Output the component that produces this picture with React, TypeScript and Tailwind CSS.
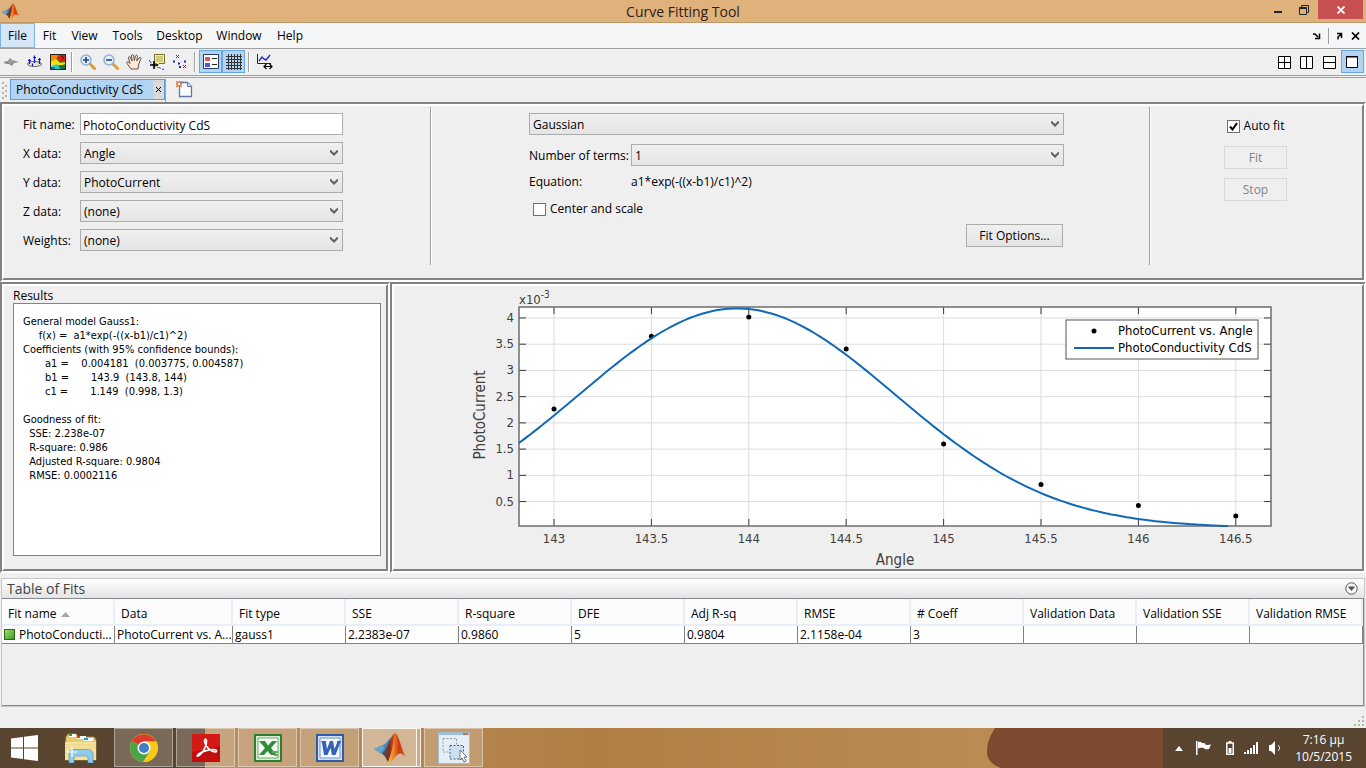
import React, { useState } from 'react';

const menuItems = [
  { name: 'File', width: 'w-[35px]' },
  { name: 'Fit', width: 'w-[29px]' },
  { name: 'View', width: 'w-[41px]' },
  { name: 'Tools', width: 'w-[45px]' },
  { name: 'Desktop', width: 'w-[59px]' },
  { name: 'Window', width: 'w-[60px]' },
  { name: 'Help', width: 'w-[42px]' },
];

const resultText = `General model Gauss1:
     f(x) =  a1*exp(-((x-b1)/c1)^2)
Coefficients (with 95% confidence bounds):
       a1 =    0.004181  (0.003775, 0.004587)
       b1 =       143.9  (143.8, 144)
       c1 =       1.149  (0.998, 1.3)

Goodness of fit:
  SSE: 2.238e-07
  R-square: 0.986
  Adjusted R-square: 0.9804
  RMSE: 0.0002116`;

const columns = [
  { title: 'Fit name', value: 'PhotoConducti...' },
  { title: 'Data', value: 'PhotoCurrent vs. A...' },
  { title: 'Fit type', value: 'gauss1' },
  { title: 'SSE', value: '2.2383e-07' },
  { title: 'R-square', value: '0.9860' },
  { title: 'DFE', value: '5' },
  { title: 'Adj R-sq', value: '0.9804' },
  { title: 'RMSE', value: '2.1158e-04' },
  { title: '# Coeff', value: '3' },
  { title: 'Validation Data', value: '' },
  { title: 'Validation SSE', value: '' },
  { title: 'Validation RMSE', value: '' },
];

const points = [
  [143, 2.265], [143.5, 3.65], [144, 4.02], [144.5, 3.408],
  [145, 1.597], [145.5, 0.825], [146, 0.423], [146.5, 0.225],
];

// ---------- small building blocks ----------

// Sunken frame: grey over white on the top left, white over grey on the bottom right
const Frame: React.FC<{ className: string; inner: string; children: React.ReactNode }> = ({ className, inner, children }) => (
  <section className={`flex border-2 border-t-[#828282] border-l-[#828282] border-r-white border-b-white ${className}`}>
    <div className={`flex-1 min-w-0 flex border-2 border-t-white border-l-white border-r-[#828282] border-b-[#828282] ${inner}`}>
      {children}
    </div>
  </section>
);

const Combo: React.FC<{ id: string; label?: string; options: string[] }> = ({ id, label, options }) => (
  <div className="grid flex-1 min-w-0">
    <select
      id={id}
      aria-label={label}
      className="col-start-1 row-start-1 h-[22px] w-full appearance-none border border-[#acacac] bg-linear-to-b from-[#f0f0f0] to-[#e5e5e5] pt-[2px] pl-[3px] text-xs leading-4"
    >
      {options.map((o) => <option key={o}>{o}</option>)}
    </select>
    <svg className="col-start-1 row-start-1 mr-[5px] justify-self-end self-center pointer-events-none" width="8" height="6" viewBox="0 0 8 6">
      <path d="M0 0.5L4 4.5L8 0.5" fill="none" stroke="#606060" strokeWidth="2" />
    </svg>
  </div>
);

const Check: React.FC<{ id: string; label: string; initial: boolean }> = ({ id, label, initial }) => {
  const [checked, setChecked] = useState(initial);
  return (
    <div className="flex h-4 items-center gap-1">
      <span className="grid place-items-center">
        <input
          id={id}
          type="checkbox"
          checked={checked}
          onChange={() => setChecked(!checked)}
          className="col-start-1 row-start-1 size-[13px] appearance-none border border-[#707070] bg-white"
        />
        {checked && (
          <svg className="col-start-1 row-start-1 pointer-events-none" width="9" height="9" viewBox="0 0 9 9">
            <path d="M1 4.5L3.5 7.5L8 1" fill="none" stroke="#000" strokeWidth="2" />
          </svg>
        )}
      </span>
      <label htmlFor={id}>{label}</label>
    </div>
  );
};

const Divider = () => <div className="h-[20px] w-[2px] border-l border-[#a0a0a0] bg-white" />;

const ToolButton: React.FC<{ label: string; active?: boolean; children: React.ReactNode }> = ({ label, active, children }) => (
  <button
    aria-label={label}
    className={`flex h-[23px] w-[23px] items-center justify-center border ${active ? 'border-[#6aa5e3] bg-[#b3d3f2]' : 'border-transparent'}`}
  >
    <svg width="16" height="16" viewBox="0 0 16 16" fill="none">{children}</svg>
  </button>
);

const MatlabLogo: React.FC<{ size: number }> = ({ size }) => (
  <svg width={size} height={size} viewBox="0 0 32 32">
    <defs>
      <linearGradient id="mlPeak" x1="0" y1="0" x2="1" y2="0">
        <stop offset="0" stopColor="#f9c03a" />
        <stop offset="0.35" stopColor="#ee7a22" />
        <stop offset="0.6" stopColor="#c83a16" />
        <stop offset="1" stopColor="#d85c20" />
      </linearGradient>
      <linearGradient id="mlBack" x1="0" y1="0" x2="1" y2="0">
        <stop offset="0" stopColor="#35506b" />
        <stop offset="0.6" stopColor="#8c2c18" />
        <stop offset="1" stopColor="#d85c20" />
      </linearGradient>
    </defs>
    <path d="M0 17L9 13C12 12 14 8 17 5L14 16L9 22L6 21Z" fill="#4689bd" />
    <path d="M0 17L6 21L10 17L9 13Z" fill="#62a5cf" />
    <path d="M8 22C13 18 16 4 21 1L20 13L14 30C12 27 11 23 8 22Z" fill="url(#mlBack)" />
    <path d="M21 1C25 2 27 17 32 25C28 21 25 20 22 24C19 28 17 30 14 31C18 23 19 9 21 1Z" fill="url(#mlPeak)" />
  </svg>
);

// ---------- window chrome ----------

const TitleBar = () => (
  <header className="flex h-[23px] border-b border-[#c09868] bg-[#dfb27b]">
    <div className="w-[96px] pl-[2px] pt-[3px]"><MatlabLogo size={17} /></div>
    <h1 className="flex-1 text-center text-sm leading-[23px] text-[#2b2118]">Curve Fitting Tool</h1>
    <div className="flex w-[96px]">
      <button aria-label="Minimize" className="flex h-[19px] w-[16px] justify-center">
        <svg width="8" height="14" viewBox="0 0 8 14"><path d="M0 11h8v2H0z" fill="#222" /></svg>
      </button>
      <button aria-label="Restore" className="flex h-[19px] w-[32px] items-center justify-center pl-[3px]">
        <svg width="10" height="10" viewBox="0 0 10 10" fill="none" stroke="#222">
          <path d="M2.5 2V0.5H9.5V7.5H8" />
          <path d="M0.5 2.5H7.5V9.5H0.5ZM0 3.5H8" />
        </svg>
      </button>
      <button aria-label="Close" className="flex h-[19px] w-[45px] items-center justify-center bg-[#c75050]">
        <svg width="8" height="8" viewBox="0 0 8 8"><path d="M0.5 0.5L7.5 7.5M7.5 0.5L0.5 7.5" stroke="#fff" strokeWidth="1.8" /></svg>
      </button>
    </div>
  </header>
);

const MenuBar = () => (
  <nav className="flex h-[26px] items-start justify-between border-b border-[#a0a0a0] bg-[#f5f6f7]">
    <div className="flex">
      {menuItems.map((item, i) => (
        <button key={item.name} className={`h-[25px] border ${item.width} ${i === 0 ? 'border-[#7eb4ea] bg-[#d5e6f7]' : 'border-transparent'}`}>
          {item.name}
        </button>
      ))}
    </div>
    <div className="flex h-[25px] items-center gap-[7px] pr-[6px]">
      <button aria-label="Dock">
        <svg width="8" height="8" viewBox="0 0 8 8"><path d="M0 2H2L5 5M6.500 1.500V6.500H2" stroke="#000" strokeWidth="1.500" fill="none" /></svg>
      </button>
      <span className="h-4 w-px bg-[#a0a0a0]" />
      <button aria-label="Undock">
        <svg width="8" height="8" viewBox="0 0 8 8"><path d="M1 1.500H5.500V6M5 2L2 5V7.500" stroke="#000" strokeWidth="1.500" fill="none" /></svg>
      </button>
      <button aria-label="Close document">
        <svg width="9" height="8" viewBox="0 0 9 8"><path d="M1 0.500L8 7.500M8 0.500L1 7.500" stroke="#000" strokeWidth="1.700" /></svg>
      </button>
    </div>
  </nav>
);

const Toolbar = () => (
  <div className="flex h-[27px] items-start justify-between border-b border-[#a0a0a0] pt-px pr-[2px]">
    <div className="flex items-center">
      <ToolButton label="Surface">
        <path d="M-1 8L4 7L6 4L8 6L15 8L10 9L8 12L5 10L2 10Z" fill="#8c8c8c" />
        <path d="M3 8L7 6L11 8L7 9Z" fill="#a3a3a3" />
      </ToolButton>
      <ToolButton label="Residuals">
        <ellipse cx="7.500" cy="10" rx="7" ry="2.500" fill="#e5e5e5" stroke="#666" />
        <path d="M2.500 5V10M7.500 1.500V9M12.500 4V10M1 6.500H4M6 3.500H9M11 5.500H14M5.500 9.500V12" stroke="#1414d8" strokeWidth="1.200" />
      </ToolButton>
      <ToolButton label="Contour">
        <path d="M0 0H16V16H0Z" fill="#2a4" />
        <path d="M0 0H9L6 5L0 8Z" fill="#f80" />
        <path d="M9 0H16V8L9 8L7 4Z" fill="#e02010" />
        <path d="M0 8L6 5L10 9L16 8V11L8 11L0 13Z" fill="#fd0" />
        <path d="M2 12L7 10L10 16H2Z" fill="#28c8e8" />
        <path d="M9 12L16 10V16H12Z" fill="#1a6a50" />
        <path d="M0.500 0.500H15.500V15.500H0.500ZM11 2L14 4L12 6M1 14H5" stroke="#222" />
      </ToolButton>
      <span className="pl-[2px] pr-[3px]"><Divider /></span>
      <ToolButton label="Zoom in">
        <path d="M9.500 9.500L14.500 14.500" stroke="#e09a3c" strokeWidth="3" strokeLinecap="round" />
        <circle cx="6" cy="6" r="5" fill="#e3f0fb" stroke="#8fb3d6" strokeWidth="1.500" />
        <path d="M3 6H9M6 3V9" stroke="#1c3f96" strokeWidth="1.600" />
      </ToolButton>
      <ToolButton label="Zoom out">
        <path d="M9.500 9.500L14.500 14.500" stroke="#e09a3c" strokeWidth="3" strokeLinecap="round" />
        <circle cx="6" cy="6" r="5" fill="#e3f0fb" stroke="#8fb3d6" strokeWidth="1.500" />
        <path d="M3 6H9" stroke="#1c3f96" strokeWidth="1.600" />
      </ToolButton>
      <ToolButton label="Pan">
        <path d="M5 15L1 9.500C0 8 1.500 7 3 8.500L4 9.500L2.500 4C2.200 2.500 4 2 4.500 3.500L6 7L5.500 2C5.500 0.300 7.500 0.300 7.700 2L8.300 6.500L9.500 2C10 0.500 11.700 1 11.400 2.500L10.800 7L13 4C14 2.800 15.500 3.800 14.700 5.200L12.500 11L12 15Z" fill="#fde8d4" stroke="#54423c" strokeWidth="0.900" />
      </ToolButton>
      <ToolButton label="Data cursor">
        <path d="M5.500 0.500H15.500V9.500H10L7.500 12V9.500H5.500Z" fill="#f7f0a0" stroke="#77722a" />
        <path d="M7 3H14M7 5H14M7 7H14" stroke="#aaa25c" />
        <path d="M0 6C2 9 4 12 8 13S12 15 15 15.500" stroke="#2b2bd8" strokeDasharray="4 1.500" />
        <path d="M1 11H9M5 7V15" stroke="#000" strokeWidth="1.600" />
      </ToolButton>
      <ToolButton label="Exclude points">
        <path d="M1 6.500h2v2h-2zM6 8.500h2v2h-2zM12 6.500h2v2h-2zM7 12h2v2h-2z" fill="#2020c8" />
        <path d="M4 1L7 4M7 1L4 4M11 11L14 14M14 11L11 14" stroke="#c81414" />
      </ToolButton>
      <span className="px-[3px]"><Divider /></span>
      <ToolButton label="Legend" active>
        <path d="M0.500 0.500H15.500V14.500H0.500Z" fill="#fff" stroke="#24405e" />
        <path d="M2 3h5v4h-5z" fill="#e05555" />
        <path d="M2 9h5v4h-5z" fill="#5555d8" />
        <path d="M9 4.500H14M9 10.500H14" stroke="#222" />
      </ToolButton>
      <ToolButton label="Grid" active>
        <path d="M2.500 0V16M5.500 0V16M8.500 0V16M11.500 0V16M14.500 0V16M0 2.500H16M0 5.500H16M0 8.500H16M0 11.500H16M0 14.500H16" stroke="#333" />
      </ToolButton>
      <span className="px-[3px]"><Divider /></span>
      <ToolButton label="Axes limits">
        <path d="M0.500 0V9.500H14" stroke="#222" />
        <path d="M2 7L5 3L7 5L9 6L13 1" stroke="#1c30b8" strokeWidth="1.400" />
        <path d="M7 12.500H15M9.500 10L7 12.500L9.500 15M12.500 10L15 12.500L12.500 15" stroke="#000" strokeWidth="1.200" />
      </ToolButton>
    </div>
    <div className="flex">
      <ToolButton label="Tile all"><path d="M2.500 2.500H14.500V14.500H2.500ZM8.500 2V14M2 8.500H14" fill="#fff" stroke="#000" /></ToolButton>
      <ToolButton label="Left right tile"><path d="M1.500 2.500H13.500V14.500H1.500ZM7.500 2V14" fill="#fff" stroke="#000" /></ToolButton>
      <ToolButton label="Top bottom tile"><path d="M1.500 2.500H13.500V14.500H1.500ZM2 8.500H14" fill="#fff" stroke="#000" /></ToolButton>
      <ToolButton label="Maximize" active><path d="M1.500 2.500H12.500V13.500H1.500ZM1 3H13" fill="#fff" stroke="#000" /></ToolButton>
    </div>
  </div>
);

const Tabs = () => (
  <div className="mt-px flex h-[25px] items-start border-t border-[#a0a0a0] pl-[2px]">
    <svg className="mt-1" width="8" height="17" viewBox="0 0 8 17" fill="#b4b4b4">
      <path d="M0 0h2v2H0zM3 3h2v2H3zM0 5h2v2H0zM3 8h2v2H3zM0 10h2v2H0zM3 13h2v2H3zM0 15h2v2H0z" />
    </svg>
    <div className="mt-px flex h-[23px] border-r border-[#a0a0a0]">
      <div className="flex h-[21px] items-center border border-[#5a9ee0] bg-[#b3d3f2] pl-[5px]">
        <button className="w-[137px] text-left whitespace-nowrap">PhotoConductivity CdS</button>
        <button aria-label="Close tab" className="flex h-full w-[11px] items-center justify-center bg-[#d9d9d9]">
          <svg width="5" height="5" viewBox="0 0 5 5"><path d="M0 0L5 5M5 0L0 5" stroke="#000" /></svg>
        </button>
      </div>
    </div>
    <button aria-label="New fit" className="ml-[10px] mt-[3px]">
      <svg width="17" height="17" viewBox="0 0 17 17">
        <path d="M3.500 1.500H11.500L15.500 5.500V15.500H3.500Z" fill="#fafcff" stroke="#5f78a4" strokeWidth="1.300" />
        <path d="M11.500 1.500V5.500H15.500" fill="#d5e0f2" stroke="#5f78a4" />
        <path d="M0 0L6 6M6 0L0 6M3 0V6M0 3H6" stroke="#e0783c" strokeWidth="1.300" />
        <circle cx="3" cy="3" r="1.200" fill="#fff" />
      </svg>
    </button>
  </div>
);

// ---------- fit settings ----------

const dataFields = [
  { id: 'xdata', label: 'X data:', options: ['Angle', 'PhotoCurrent'] },
  { id: 'ydata', label: 'Y data:', options: ['PhotoCurrent', 'Angle'] },
  { id: 'zdata', label: 'Z data:', options: ['(none)'] },
  { id: 'weights', label: 'Weights:', options: ['(none)'] },
];

const FitSettings = () => (
  <Frame className="h-[180px]" inner="pt-px pb-[13px]">
    <div className="flex w-[427px] flex-col gap-[7px] border-r border-[#a0a0a0] pt-[6px] pl-[19px]">
      <div className="flex items-center">
        <label htmlFor="fitname" className="w-[57px] pt-[2px]">Fit name:</label>
        <input id="fitname" defaultValue="PhotoConductivity CdS" className="h-[22px] w-[263px] border border-[#abadb3] bg-white px-[2px] pt-[2px]" />
      </div>
      {dataFields.map((f) => (
        <div key={f.id} className="flex w-[320px] items-center">
          <label htmlFor={f.id} className="w-[57px] pt-[2px]">{f.label}</label>
          <Combo id={f.id} options={f.options} />
        </div>
      ))}
    </div>

    <div className="flex flex-1 flex-col border-l border-r border-l-white border-r-[#a0a0a0] pt-[6px] pl-[97px] pr-[85px]">
      <div className="flex"><Combo id="model" label="Fit type" options={['Gaussian', 'Polynomial', 'Exponential']} /></div>
      <div className="mt-[9px] flex items-center">
        <label htmlFor="terms" className="w-[102px] pt-[2px]">Number of terms:</label>
        <Combo id="terms" options={['1', '2', '3']} />
      </div>
      <div className="mt-2 flex h-4 items-center">
        <span className="w-[102px]">Equation:</span>
        <span>a1*exp(-((x-b1)/c1)^2)</span>
      </div>
      <div className="mt-[11px] pl-1"><Check id="center" label="Center and scale" initial={false} /></div>
      <button className="mt-[7px] mr-px h-[23px] w-[97px] shrink-0 self-end border border-[#acacac] bg-linear-to-b from-[#f0f0f0] to-[#e5e5e5]">
        Fit Options...
      </button>
    </div>

    <div className="flex w-[212px] flex-col items-center border-l border-white pt-[11px] pr-[2px]">
      <Check id="autofit" label="Auto fit" initial />
      <button disabled className="mt-3 h-[23px] w-[63px] border border-[#d9d9d9] text-[#838383]">Fit</button>
      <button disabled className="mt-[9px] h-[23px] w-[63px] border border-[#d9d9d9] text-[#838383]">Stop</button>
    </div>
  </Frame>
);

// ---------- plot ----------

const px = (x: number) => 160 + (x - 143) * 194.8;
const py = (y: number) => 241.8 - y * 52.46;

const curve = () => {
  const out: string[] = [];
  for (let x = 142.82; x <= 146.465; x += 0.02) {
    const y = 4.181 * Math.exp(-(((x - 143.94) / 1.149) ** 2));
    out.push(`${px(x).toFixed(1)},${py(y).toFixed(1)}`);
  }
  return out.join(' ');
};

const xTicks = [143, 143.5, 144, 144.5, 145, 145.5, 146, 146.5];
const yTicks = [0.5, 1, 1.5, 2, 2.5, 3, 3.5, 4];

const FitPlot = () => (
  <svg className="min-h-[283px] w-full flex-1 font-['DejaVu_Sans_Condensed','Noto_Sans',sans-serif]" viewBox="0 0 968 283" role="img" aria-label="PhotoCurrent against Angle">
    <rect x="125" y="21" width="752" height="219" fill="#fff" />
    {xTicks.map((t) => (
      <g key={t}>
        <path d={`M${px(t)} 21V240`} stroke="#dcdcdc" />
        <path d={`M${px(t)} 21v7M${px(t)} 240v-7`} stroke="#3a3a3a" />
        <text x={px(t)} y="257" textAnchor="middle" fontSize="13" fill="#404040">{t}</text>
      </g>
    ))}
    {yTicks.map((t) => (
      <g key={t}>
        <path d={`M125 ${py(t)}H877`} stroke="#dcdcdc" />
        <path d={`M125 ${py(t)}h7M877 ${py(t)}h-7`} stroke="#3a3a3a" />
        <text x="120" y={py(t) + 4} textAnchor="end" fontSize="13" fill="#404040">{t}</text>
      </g>
    ))}
    <rect x="125" y="21" width="752" height="219" fill="none" stroke="#6e6e6e" strokeWidth="1.500" />
    <text x="125" y="18" fontSize="13" fill="#404040">x10<tspan dy="-6" fontSize="10">-3</tspan></text>
    {points.map(([x, y]) => <circle key={x} cx={px(x)} cy={py(y)} r="2.500" fill="#000" />)}
    <polyline points={curve()} fill="none" stroke="#1168b8" strokeWidth="2" />
    <text x="501" y="279" textAnchor="middle" fontSize="15" fill="#404040">Angle</text>
    <text transform="translate(91 129) rotate(-90)" textAnchor="middle" fontSize="15" fill="#404040">PhotoCurrent</text>
    <rect x="672" y="34" width="192" height="39" fill="#fff" stroke="#555" />
    <circle cx="700" cy="45" r="2.500" fill="#000" />
    <path d="M680 62H720" stroke="#1168b8" strokeWidth="2" />
    <text x="724" y="49" fontSize="13">PhotoCurrent vs. Angle</text>
    <text x="724" y="66" fontSize="13">PhotoConductivity CdS</text>
  </svg>
);

// ---------- table ----------

const FitsTable = () => (
  <section className="mx-px mt-[5px] border border-[#c8c8c8]">
    <div className="flex h-[19px] items-center justify-between bg-linear-to-b from-white to-[#e4e4e4] pl-[5px] pr-[6px]">
      <h2 className="text-sm leading-[19px] text-[#444]">Table of Fits</h2>
      <button aria-label="Table menu">
        <svg width="13" height="13" viewBox="0 0 13 13">
          <circle cx="6.500" cy="6.500" r="5.700" fill="#fafafa" stroke="#555" />
          <path d="M3.500 4.500H9.500V5.500L6.500 9L3.500 5.500Z" fill="#555" />
        </svg>
      </button>
    </div>
    <div className="h-[108px] border border-l-0 border-[#828790]">
      <table className="w-full table-fixed border-separate border-spacing-0 bg-white">
        <thead>
          <tr className="h-[27px] bg-[#fcfcfc]">
            {columns.map((c, i) => (
              <th key={c.title} className={`border-r-2 border-b-2 border-[#e9eff8] pt-1 pl-[6px] text-left font-normal whitespace-nowrap ${i === 1 ? 'w-[118px]' : ''}`}>
                {c.title}
                {i === 0 && (
                  <svg className="ml-1 inline-block" width="9" height="5" viewBox="0 0 9 5"><path d="M0 5L4.500 0L9 5Z" fill="#a8a898" /></svg>
                )}
              </th>
            ))}
          </tr>
        </thead>
        <tbody>
          <tr className="h-[18px]">
            {columns.map((c, i) => (
              <td key={c.title} className="border-r border-b border-[#828282] p-0 pl-[2px] leading-[17px] whitespace-nowrap">
                <div className="flex items-center gap-1">
                  {i === 0 && <span className="size-[11px] shrink-0 border border-[#2c6414] bg-linear-to-br from-[#9be070] to-[#3a9a20]" />}
                  <span>{c.value || '\u00a0'}</span>
                </div>
              </td>
            ))}
          </tr>
        </tbody>
      </table>
    </div>
  </section>
);

// ---------- taskbar ----------

const TaskButton: React.FC<{ label: string; active?: boolean; children: React.ReactNode }> = ({ label, active, children }) => (
  <button
    aria-label={label}
    className={`flex h-[39px] items-center justify-center border ${active ? 'w-[55px] border-white/90 bg-white/40' : 'w-[59px] border-white/40 bg-white/20'}`}
  >
    {children}
  </button>
);

const Taskbar = () => (
  <footer className="relative flex h-10 items-stretch justify-between overflow-hidden bg-[#b58652]">
    {/* desktop picture showing through the bar */}
    <div className="absolute inset-0 flex">
      <div className="w-[205px] bg-[#58442f]" />
      <div className="flex-1 bg-linear-to-r from-[#b98f61] via-[#b07e42] to-[#b98c54]" />
      <svg width="176" height="40" viewBox="0 0 176 40" className="bg-[#b98c54]">
        <path d="M8 0H176V40H14C4 36 0 31 0 24C0 14 4 6 8 0Z" fill="#7d4a30" />
      </svg>
      <div className="w-[203px] bg-[#58442f]" />
    </div>
    <div className="relative flex items-start pl-[11px]">
      <button aria-label="Start" className="flex h-10 w-[54px] items-center">
        <svg width="27" height="26" viewBox="0 0 27 26" fill="#fff">
          <path d="M0 3.500L12 2V12.500H0ZM13 1.800L27 0V12.500H13ZM0 13.500H12V24L0 22.500ZM13 13.500H27V26L13 24.200Z" />
        </svg>
      </button>
      <button aria-label="File Explorer" className="flex h-10 w-[49px] items-center">
        <svg width="32" height="30" viewBox="0 0 32 30">
          <path d="M1 4L3 1H11L13 4H29L31 7V27H0Z" fill="#e5cb73" stroke="#b99b45" strokeWidth="0.700" />
          <path d="M4 1h7v3h-7z" fill="#fff" /><path d="M4 1h3v2h-3z" fill="#28a428" />
          <path d="M12 3h9v3h-9z" fill="#fff" /><path d="M12 3h3v2h-3z" fill="#d84020" />
          <path d="M19 5h9v3h-9z" fill="#fff" /><path d="M19 5h4v2h-4z" fill="#2890d8" />
          <path d="M0 9H31V27H0Z" fill="#f5e29a" />
          <path d="M0 12H31M0 15H31" stroke="#e9d184" />
          <path d="M4 30V20C4 17 7 16.500 10 16.500H22C26 16.500 28 18 28 21V30H23V25C23 23 21 23 18 23H14C11 23 9 23 9 25V30Z" fill="#8fcbea" stroke="#509cc4" strokeWidth="0.700" />
          <path d="M7 14V24M2 19H12" stroke="#fff" strokeWidth="1.200" />
        </svg>
      </button>
      <div className="flex gap-[3px]">
        <TaskButton label="Chrome">
          <svg width="28" height="28" viewBox="0 0 28 28">
            <circle cx="14" cy="14" r="14" fill="#f7cb18" />
            <path d="M14 14L1.900 7A14 14 0 0 1 26.100 7.500H14Z" fill="#dc3a2c" />
            <path d="M14 14L1.900 7A14 14 0 0 0 13 28L20 17.500Z" fill="#4aa448" />
            <path d="M14 7.500H26.100A14 14 0 0 1 13 28L20 17Z" fill="#f7cb18" />
            <circle cx="14" cy="14" r="6.500" fill="#fff" />
            <circle cx="14" cy="14" r="5" fill="#3f7fc8" />
          </svg>
        </TaskButton>
        <TaskButton label="Adobe Reader">
          <svg width="28" height="28" viewBox="0 0 28 28">
            <path d="M0 0H28V28H0Z" fill="#c00d0d" />
            <path d="M0 0H28V12L0 18Z" fill="#d21a16" />
            <path d="M6 22C9 21 15 13 14.500 6.500C14 4 12 5 12.700 8C13.500 12 18 17.500 23 18C25.500 18 25 15.500 22 15.600C17 15.700 10 17.500 6.500 20C4.500 21.800 5 22.800 6 22Z" fill="none" stroke="#fff" strokeWidth="1.600" />
          </svg>
        </TaskButton>
        <TaskButton label="Excel">
          <svg width="28" height="28" viewBox="0 0 28 28">
            <path d="M1 1H27V27H1Z" fill="#d7ecd2" stroke="#2c7d32" strokeWidth="2" />
            <path d="M4 4H24V24H4Z" fill="#f4faf2" stroke="#6fae68" />
            <path d="M5 7H11L14 11.500L18 7H23L17 14L23 21H17L13.500 17L10 21H5L11 14Z" fill="#2f8c3a" />
            <path d="M18 17h6v2h-6zM20 20h4v2h-4z" fill="#5fa862" />
          </svg>
        </TaskButton>
        <TaskButton label="Word">
          <svg width="28" height="28" viewBox="0 0 28 28">
            <path d="M1 1H27V27H1Z" fill="#d5e1f5" stroke="#2f5ba8" strokeWidth="2" />
            <path d="M4 4H24V24H4Z" fill="#f3f7fd" stroke="#6f92d0" />
            <path d="M5 7H10V9L11 15L14 7H17L18.500 15L21 9V7H25L19.500 21H16L14.500 14L11.500 21H8L6 9Z" fill="#3563b4" />
          </svg>
        </TaskButton>
        <div className="flex">
          <TaskButton label="MATLAB" active><MatlabLogo size={32} /></TaskButton>
          <span className="h-[39px] w-1 border border-l-0 border-white/80 bg-white/30" />
        </div>
        <TaskButton label="Snipping Tool">
          <svg width="32" height="32" viewBox="0 0 32 32">
            <path d="M0.500 0.500H31.500V31.500H0.500Z" fill="#e5eef6" stroke="#a5bccf" />
            <path d="M1 1H31V3H1Z" fill="#9cc0dc" /><path d="M25 1h5v2h-5z" fill="#d86848" />
            <path d="M5 6.500H18.500V20H5Z" fill="none" stroke="#8a9cac" strokeDasharray="2 1.500" />
            <path d="M12 13.500H25.500V27H12Z" fill="#cde0f0" stroke="#34608c" strokeDasharray="2 1.500" />
            <path d="M22 18V28L24 26L26 30L28 29L26 25H29Z" fill="#fff" stroke="#555" strokeWidth="0.800" />
          </svg>
        </TaskButton>
      </div>
    </div>
    <div className="relative flex w-[203px] items-center text-white">
      <button aria-label="Show hidden icons" className="ml-3">
        <svg width="8" height="5" viewBox="0 0 8 5"><path d="M0 5L4 0L8 5Z" fill="#fff" /></svg>
      </button>
      <svg className="ml-[13px]" width="15" height="14" viewBox="0 0 15 14" fill="#fff"><path d="M0 0h1.500v14H0zM2 1C5 0 6 3 9 2V3.500C11 4 12 4 15 3.500L13 8C11 8.500 9 8.500 7.500 7C6 6.500 4 6.500 2 7.500Z" /></svg>
      <svg className="ml-[15px]" width="8" height="14" viewBox="0 0 8 14"><path d="M0.800 2H7.200V13.200H0.800Z" fill="none" stroke="#fff" strokeWidth="1.500" /><path d="M2.500 0h3v2h-3zM2.500 7h3v5h-3z" fill="#fff" /></svg>
      <svg className="ml-[10px]" width="14" height="12" viewBox="0 0 14 12" fill="#fff"><path d="M0 10h2v2H0zM3 8h2v4H3zM6 6h2v6H6zM9 3h2v9H9zM12 0h2v12h-2z" /></svg>
      <svg className="ml-[11px]" width="12" height="14" viewBox="0 0 12 14"><path d="M0 4H2L6 0V14L2 10H0Z" fill="#fff" /><path d="M9 4C11 6 11 8 9 10" fill="none" stroke="#fff" /></svg>
      <div className="ml-auto mr-[14px] flex flex-col items-center text-xs leading-[17px]">
        <span>7:16 μμ</span>
        <span>10/5/2015</span>
      </div>
    </div>
  </footer>
);

export default function App() {
  return (
    <div className="flex min-h-screen flex-col bg-[#efefef] font-['Open_Sans','Noto_Sans',sans-serif] text-xs leading-4 text-black">
      <TitleBar />
      <MenuBar />
      <Toolbar />
      <Tabs />
      <main className="flex flex-1 flex-col">
        <FitSettings />
        <div className="flex flex-1">
          <Frame className="w-[390px] shrink-0" inner="flex-col pt-[3px] pb-[13px] pl-[9px] pr-[5px]">
            <h2 className="leading-[14px]">Results</h2>
            <pre className="flex-1 border border-[#828282] bg-white pt-[11px] pl-[9px] font-['DejaVu_Sans_Condensed','Noto_Sans',sans-serif] text-[11px] leading-[14px]">{resultText}</pre>
          </Frame>
          <Frame className="flex-1 min-w-0" inner="flex-col">
            <FitPlot />
          </Frame>
        </div>
        <FitsTable />
        <div className="flex h-[21px] items-end justify-end p-[2px]">
          <svg width="10" height="10" viewBox="0 0 10 10" fill="#b5b5a0">
            <path d="M8 0h2v2H8zM4 4h2v2H4zM8 4h2v2H8zM0 8h2v2H0zM4 8h2v2H4zM8 8h2v2H8z" />
          </svg>
        </div>
      </main>
      <Taskbar />
    </div>
  );
}
